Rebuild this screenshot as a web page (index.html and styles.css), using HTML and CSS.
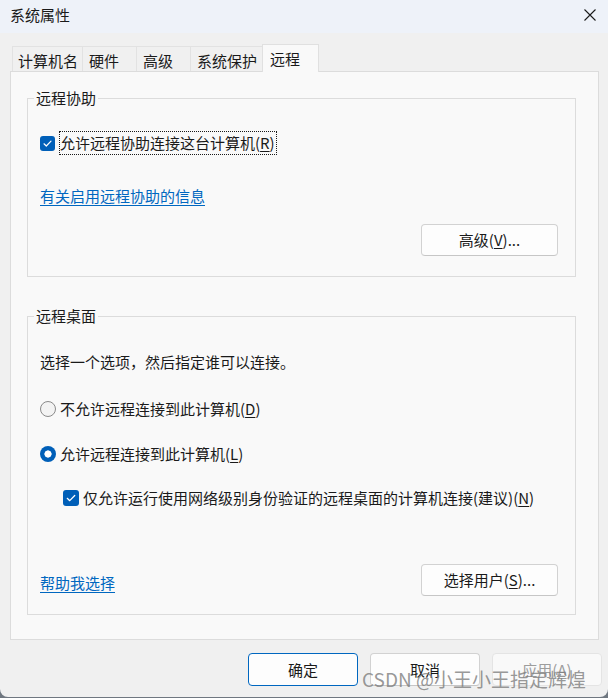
FILE: index.html
```html
<!DOCTYPE html>
<html lang="zh-CN">
<head>
<meta charset="utf-8">
<title>系统属性</title>
<link rel="stylesheet" href="styles.css">
</head>
<body>
<div class="window">
  <div class="titlebar">
    <span class="title">系统属性</span>
    <svg class="close" width="12" height="12" viewBox="0 0 12 12"><path d="M0.5 0.5L11.5 11.5M11.5 0.5L0.5 11.5" stroke="#1a1a1a" stroke-width="1.1" fill="none"/></svg>
  </div>
  <div class="tabs">
    <div class="tab">计算机名</div>
    <div class="tab">硬件</div>
    <div class="tab">高级</div>
    <div class="tab">系统保护</div>
    <div class="tab tab-active">远程</div>
  </div>
  <div class="panel">
    <div class="group group-assist">
      <div class="group-title">远程协助</div>
      <div class="check-row check-first">
        <span class="checkbox"><svg width="15" height="15" viewBox="0 0 15 15"><path d="M4 7.8L6.3 10L11 5.2" stroke="#fff" stroke-width="1.2" fill="none" stroke-linecap="round" stroke-linejoin="round"/></svg></span>
        <span class="focus-label">允许远程协助连接这台计算机(<u>R</u>)</span>
      </div>
      <a class="link link-assist">有关启用远程协助的信息</a>
      <div class="btn-row btn-row-assist"><span class="btn">高级(<u>V</u>)...</span></div>
    </div>
    <div class="group group-desktop">
      <div class="group-title">远程桌面</div>
      <div class="text-line intro">选择一个选项，然后指定谁可以连接。</div>
      <div class="radio-row radio-first"><span class="radio"></span><span>不允许远程连接到此计算机(<u>D</u>)</span></div>
      <div class="radio-row radio-second"><span class="radio radio-on"></span><span>允许远程连接到此计算机(<u>L</u>)</span></div>
      <div class="check-row check-nla">
        <span class="checkbox"><svg width="16" height="16" viewBox="0 0 15 15"><path d="M4 7.8L6.3 10L11 5.2" stroke="#fff" stroke-width="1.2" fill="none" stroke-linecap="round" stroke-linejoin="round"/></svg></span>
        <span class="check-text">仅允许运行使用网络级别身份验证的远程桌面的计算机连接(建议)(<u>N</u>)</span>
      </div>
      <div class="btn-row btn-row-desktop">
        <a class="link link-help">帮助我选择</a>
        <span class="btn">选择用户(<u>S</u>)...</span>
      </div>
    </div>
  </div>
  <div class="footer">
    <span class="btn btn-footer btn-default">确定</span>
    <span class="btn btn-footer">取消</span>
    <span class="btn btn-footer btn-disabled">应用(<u>A</u>)</span>
  </div>
  <div class="watermark">CSDN @小王小王指定辉煌</div>
</div>
</body>
</html>
```
FILE: styles.css
```css
* { box-sizing: border-box; }
html, body { margin: 0; padding: 0; }
body {
  width: 608px;
  height: 698px;
  background: #6f7780;
  font-family: "Noto Sans CJK SC", "Microsoft YaHei", sans-serif;
  font-size: 15px;
  color: #1a1a1a;
  overflow: hidden;
}
u { text-decoration: underline; text-underline-offset: 2px; text-decoration-thickness: 1px; }

.window {
  position: relative;
  width: 608px;
  height: 697px;
  background: #f0f0f0;
  border-bottom-left-radius: 8px;
  border-bottom-right-radius: 8px;
  overflow: hidden;
}

.titlebar {
  height: 33px;
  background: #eef2f9;
  display: flex;
  justify-content: space-between;
  align-items: flex-start;
  padding: 5px 12px 0 10px;
}
.title { line-height: 20px; }
.close { margin-top: 4px; }

.tabs {
  margin-top: 11px;
  height: 27px;
  padding-left: 12px;
  display: flex;
  align-items: flex-end;
}
.tab {
  height: 25px;
  min-width: 55px;
  padding: 2px 5px 0 6px;
  line-height: 23px;
  border: 1px solid #e2e2e2;
  border-bottom: none;
  margin-right: -1px;
  background: #f0f0f0;
  color: #1a1a1a;
}
.tab:first-child { padding-left: 5px; padding-right: 4px; }
.tab-active {
  position: relative;
  z-index: 1;
  height: 28px;
  min-width: 57px;
  margin-bottom: -1px;
  padding-left: 7px;
  background: #f9f9f9;
  border-color: #e0e0e0;
}

.panel {
  margin: 0 9px 0 10px;
  height: 569px;
  background: #f9f9f9;
  border: 1px solid #dcdcdc;
  padding: 26px 22px 24px 16px;
}

.group {
  position: relative;
  border: 1px solid #dcdcdc;
  padding: 0 17px 0 12px;
}
.group-assist { height: 179px; }
.group-desktop { height: 299px; margin-top: 39px; }
.group-title {
  position: absolute;
  top: -11px;
  left: 6px;
  padding: 0 2px;
  line-height: 20px;
  background: #f9f9f9;
}

.check-row {
  display: flex;
  align-items: center;
}
.check-first { margin-top: 32px; height: 24px; }
.checkbox {
  width: 15px;
  height: 15px;
  border-radius: 3px;
  background: #005fb8;
  display: block;
  flex: none;
}
.checkbox svg { display: block; }
.focus-label {
  margin-left: 4px;
  border: 1px dotted #1a1a1a;
  line-height: 22px;
  padding: 0 1px 0 0;
}

.link {
  color: #0067c0;
  text-decoration: underline;
  text-underline-offset: 3px;
  text-decoration-thickness: 1px;
  line-height: 20px;
}
.link-assist { display: inline-block; margin-top: 31px; }

.btn-row { display: flex; justify-content: flex-end; align-items: center; }
.btn-row-assist { margin-top: 18px; }
.btn-row-desktop { margin-top: 56px; justify-content: space-between; }
.link-help { margin-top: 5px; }

.btn {
  display: flex;
  align-items: center;
  justify-content: center;
  width: 137px;
  height: 32px;
  background: #fdfdfd;
  border: 1px solid #d2d2d2;
  border-bottom-color: #c6c6c6;
  border-radius: 4px;
  line-height: 20px;
  color: #1a1a1a;
}

.text-line { line-height: 20px; }
.intro { margin-top: 35px; }

.radio-row {
  display: flex;
  align-items: center;
  height: 20px;
  line-height: 20px;
}
.radio-first { margin-top: 27px; }
.radio-second { margin-top: 25px; }
.radio {
  width: 16px;
  height: 16px;
  border-radius: 50%;
  border: 1px solid #8a8a8a;
  background: #f3f3f3;
  margin-right: 4px;
  flex: none;
}
.radio-on {
  border: none;
  background: radial-gradient(circle, #ffffff 0 3.3px, #005fb8 3.9px);
}

.check-nla {
  margin-top: 24px;
  margin-left: 23px;
  height: 20px;
  line-height: 20px;
}
.check-nla .checkbox { width: 16px; height: 16px; }
.check-text { margin-left: 4px; }

.footer {
  display: flex;
  justify-content: flex-end;
  gap: 12px;
  padding: 13px 6px 0 0;
}
.btn-footer { width: 110px; height: 33px; }
.btn-default { border-color: #0067c0; }
.btn-disabled {
  color: #9d9d9d;
  background: #f9f9f9;
  border-color: #e4e4e4;
}

.watermark {
  position: absolute;
  left: 362px;
  top: 666px;
  font-size: 19px;
  line-height: 26px;
  color: rgba(125, 125, 125, 0.8);
  font-family: "Noto Sans CJK SC", "Liberation Sans", sans-serif;
  white-space: nowrap;
}
```
